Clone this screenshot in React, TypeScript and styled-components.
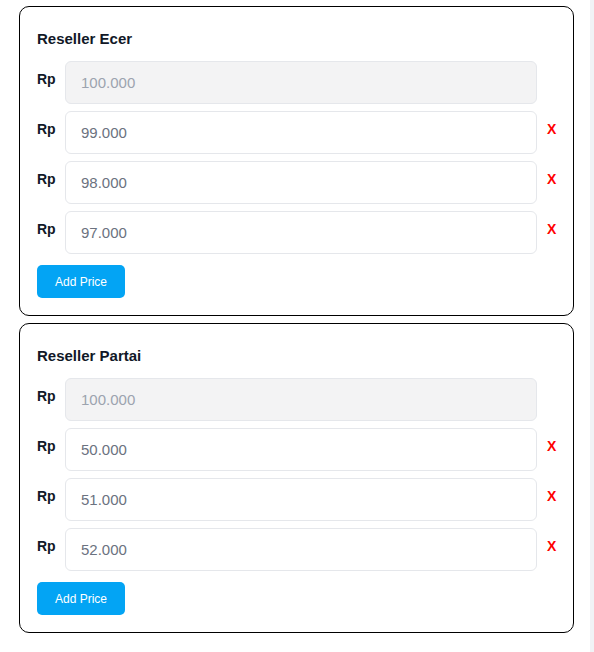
import React from "react";
import styled, { createGlobalStyle } from "styled-components";

const Global = createGlobalStyle`
  html, body { margin: 0; padding: 0; background: #ffffff; }
  body { font-family: "Liberation Sans", Arial, sans-serif; }
  * { box-sizing: border-box; }
`;

const Page = styled.div`
  display: flex;
  width: 594px;
  min-height: 652px;
`;

const Main = styled.div`
  flex: 1;
  display: flex;
  flex-direction: column;
  gap: 7px;
  padding: 6px 16px 0 19px;
`;

const Strip = styled.div`
  width: 4px;
  background: #f1f3f6;
`;

const Card = styled.section`
  border: 1px solid #000000;
  border-radius: 10px;
  padding: 17px 16px 17px 17px;
  display: flex;
  flex-direction: column;
  gap: 7px;
`;

const Title = styled.h3`
  margin: 0;
  font-size: 15px;
  font-weight: 700;
  color: #111827;
  line-height: 30px;
`;

const Row = styled.div`
  display: flex;
  align-items: flex-start;
`;

const Label = styled.span`
  width: 28px;
  flex: none;
  font-size: 14px;
  font-weight: 700;
  color: #111827;
  line-height: 20px;
  margin-top: 8px;
`;

const Input = styled.input`
  flex: 1;
  min-width: 0;
  height: 43px;
  border: 1px solid #e5e7eb;
  border-radius: 6px;
  padding: 0 15px;
  font-family: "Liberation Sans", Arial, sans-serif;
  font-size: 15px;
  color: #6b7280;
  background: #ffffff;
  outline: none;
  &:disabled {
    background: #f3f3f4;
    color: #9ca3af;
  }
`;

const Remove = styled.span<{ $hidden?: boolean }>`
  width: 20px;
  flex: none;
  padding-left: 10px;
  font-size: 14px;
  font-weight: 700;
  color: #ff0000;
  line-height: 20px;
  margin-top: 8px;
  white-space: nowrap;
  visibility: ${(p) => (p.$hidden ? "hidden" : "visible")};
`;

const AddButton = styled.button`
  align-self: flex-start;
  margin-top: 4px;
  height: 33px;
  padding: 0 18px;
  border: none;
  border-radius: 5px;
  background: #03a4f4;
  color: #ffffff;
  font-family: "Liberation Sans", Arial, sans-serif;
  font-size: 12px;
`;

const groups = [
  { title: "Reseller Ecer", base: "100.000", prices: ["99.000", "98.000", "97.000"] },
  { title: "Reseller Partai", base: "100.000", prices: ["50.000", "51.000", "52.000"] },
];

export default function App() {
  return (
    <>
      <Global />
      <Page>
        <Main>
          {groups.map((g) => (
            <Card key={g.title}>
              <Title>{g.title}</Title>
              <Row>
                <Label>Rp</Label>
                <Input disabled defaultValue={g.base} />
                <Remove $hidden>X</Remove>
              </Row>
              {g.prices.map((p) => (
                <Row key={p}>
                  <Label>Rp</Label>
                  <Input defaultValue={p} />
                  <Remove>X</Remove>
                </Row>
              ))}
              <AddButton>Add Price</AddButton>
            </Card>
          ))}
        </Main>
        <Strip />
      </Page>
    </>
  );
}
